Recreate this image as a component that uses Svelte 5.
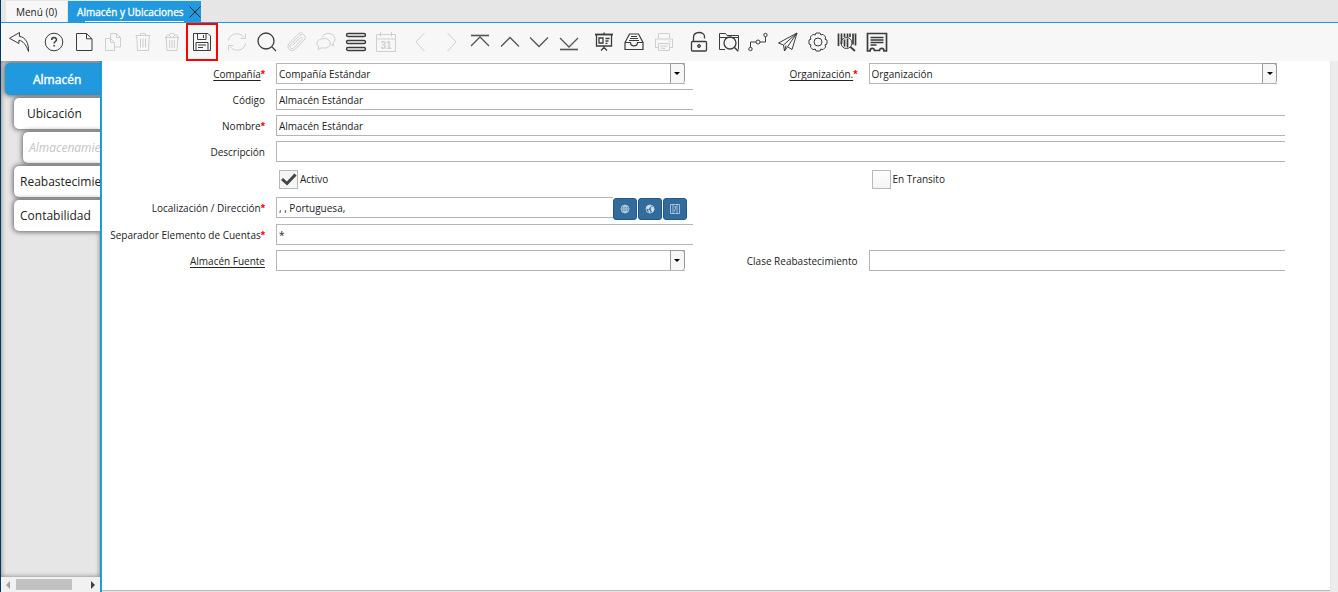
<script>
  const groups = [
    { size: 'one', items: [{ id: 'undo', label: 'Ignorar cambios' }] },
    {
      size: 'six',
      items: [
        { id: 'help', label: 'Ayuda' },
        { id: 'new', label: 'Nuevo' },
        { id: 'copy', label: 'Copiar', off: true },
        { id: 'trash', label: 'Eliminar', off: true },
        { id: 'trashAll', label: 'Eliminar selección', off: true },
        { id: 'save', label: 'Guardar', marked: true }
      ]
    },
    {
      size: 'six records',
      items: [
        { id: 'refresh', label: 'Refrescar', off: true },
        { id: 'find', label: 'Buscar' },
        { id: 'attach', label: 'Anexo', off: true },
        { id: 'chat', label: 'Notas', off: true },
        { id: 'grid', label: 'Cambiar vista' },
        { id: 'calendar', label: 'Historia', off: true }
      ]
    },
    {
      size: 'six',
      items: [
        { id: 'prev', label: 'Registro padre', off: true },
        { id: 'next', label: 'Registro detalle', off: true },
        { id: 'first', label: 'Primero', mid: true },
        { id: 'up', label: 'Anterior', mid: true },
        { id: 'down', label: 'Siguiente', mid: true },
        { id: 'last', label: 'Último', mid: true }
      ]
    },
    {
      size: 'three',
      items: [
        { id: 'report', label: 'Reporte' },
        { id: 'archive', label: 'Archivo' },
        { id: 'print', label: 'Imprimir', off: true }
      ]
    },
    {
      size: 'seven',
      items: [
        { id: 'lock', label: 'Bloquear' },
        { id: 'zoom', label: 'Visor' },
        { id: 'flow', label: 'Flujo' },
        { id: 'send', label: 'Solicitudes' },
        { id: 'gear', label: 'Proceso' },
        { id: 'barcode', label: 'Producto' },
        { id: 'receipt', label: 'Formulario' }
      ]
    }
  ];

  const sideTabs = [
    { label: 'Almacén', kind: 'active' },
    { label: 'Ubicación', kind: 'wide' },
    { label: 'Almacenamiento', kind: 'nested' },
    { label: 'Reabastecimiento', kind: '' },
    { label: 'Contabilidad', kind: '' }
  ];

  let active = $state(true);
  let transit = $state(false);
</script>

{#snippet icon(id)}
  <svg viewBox="0 0 22 22" width="22" height="22" aria-hidden="true">
    {#if id === 'undo'}
      <path d="M11.5 1.5 1.5 7.3l9.4 5.2V9.3c4 .6 7 4 9.6 11.2.5-8-3-14.5-9.2-15.2z" />
    {:else if id === 'help'}
      <circle cx="11" cy="11" r="8.8" />
      <path stroke-width="1.5" d="M8.7 9c0-3.200 4.800-3.200 4.800-.3 0 1.800-2.400 1.800-2.400 3.800M11.100 14v1.600" />
    {:else if id === 'new'}
      <path d="M3.500 2.500h10l5.500 5.300v11.700h-15.500zM13.500 2.500v5.300H19" />
    {:else if id === 'copy'}
      <path d="M8.500 7.500v-5h6l4 4v9.500h-6M14.500 2.500v4h4M3.500 7.500h5l4 4v8h-9zM8.500 7.500v4h4" />
    {:else if id === 'trash'}
      <path d="M3.500 4.500h15M8.500 4.500v-2h5v2M4.700 4.500l.8 15h11l.8-15M8.500 7.500v9M11 7.500v9M13.500 7.500v9" />
    {:else if id === 'trashAll'}
      <path d="M4 6.500h14M5 6.500l1 13h10l1-13M5 6.300c0-2 1.600-2.600 3-2.300 1-2.200 5-2.200 6 0 1.500-.3 3 .5 3 2.300M8.700 9v8M11 9v8M13.300 9v8M8 4l2 2M14 4l-2 2" />
    {:else if id === 'save'}
      <path d="M2.500 2.500h14.500l2.500 2.500v14.500h-17zM6.500 2.500v6h8.500v-6M12.500 4v3M5 19.500v-8h12v8M7 14h8M7 16.500h5" />
    {:else if id === 'refresh'}
      <path d="M2.500 9.500C3.500 2 14 .5 18 6.500M19.500 2.500v5h-5M19.500 12.500c-1 7.500-11.500 9-15.500 3M2.500 19.500v-5h5" />
    {:else if id === 'find'}
      <circle cx="10" cy="10" r="8" stroke-width="1.300" /><path stroke-width="1.300" d="M15.600 15.600 20 20" />
    {:else if id === 'attach'}
      <path d="M6.500 14.500 14 6.800c1.500-1.300 3.200.5 1.800 1.900l-7.600 8c-2.700 2.500-5.700-.5-3.300-3.200l8.600-9c3.500-3.400 8 .8 4.700 4.500l-8.600 9c-4.500 4.200-10.300-1.300-6.300-5.800l8-8.400c1.400-1.500 3-2.300 5-2" />
    {:else if id === 'chat'}
      <path d="M7.500 6C9 1 19 1 20 7.500c.2 2-.8 3.300-2 4.300l.7 3-3-1.500M9 7.500c8 0 8.500 9.500.5 9.500-1.400 0-2 .1-2.700-.3L3 18.500l.8-3C-.5 12.500 3 7.500 9 7.500z" />
    {:else if id === 'grid'}
      <rect x="1.500" y="2.500" width="19" height="3" rx="1.500" stroke-width="1.400" /><rect x="1.500" y="9.500" width="19" height="3" rx="1.500" stroke-width="1.400" /><rect x="1.500" y="16.500" width="19" height="3" rx="1.500" stroke-width="1.400" />
    {:else if id === 'calendar'}
      <path d="M1.500 3.500h19v17h-19zM1.500 8h19M5.500 1v4.500M16.500 1v4.500" />
      <text x="11" y="18">31</text>
    {:else if id === 'prev'}
      <path d="M14.500 2 6 11l8.500 9" />
    {:else if id === 'next'}
      <path d="M7.500 2l8.500 9-8.500 9" />
    {:else if id === 'first'}
      <path d="M2 4.500h18" stroke-width="1.600" /><path stroke-width="1.300" d="M2 15l9-9 9 9" />
    {:else if id === 'up'}
      <path stroke-width="1.300" d="M2 15.500l9-9 9 9" />
    {:else if id === 'down'}
      <path stroke-width="1.300" d="M2 6.500l9 9 9-9" />
    {:else if id === 'last'}
      <path stroke-width="1.300" d="M2 7l9 9 9-9" /><path d="M2 18.500h18" stroke-width="1.600" />
    {:else if id === 'report'}
      <path stroke-width="1.800" d="M2 3.500h18" />
      <path stroke-width="1.300" d="M3.500 4v11h15V4M6 7h4v5H6zM12.500 7.500h4M12.500 10h3M12.500 12.300h2M11 1.500v2M11 15v3M8 19.500l3-3 3 3" />
    {:else if id === 'archive'}
      <path stroke-width="1.200" d="M2 11.500 6.500 3h9L20 11.500v7H2zM2 11.500h5.500c0 4.500 7 4.500 7 0H20M8 5.500h6M7 7.500h8M6 9.500h10" />
    {:else if id === 'print'}
      <path d="M5.500 8V2.500h11V8M5.500 16.500h-3V8h17v8.500h-3M5.500 12.500h11v7h-11zM7.500 15h7M7.500 17.300h5M15.500 10.300h2" />
    {:else if id === 'lock'}
      <rect x="3.500" y="10.500" width="15" height="9.500" rx="1" stroke-width="1.300" />
      <path stroke-width="1.300" d="M5.500 10V6.500c0-6.500 11-6.500 11-1v2M11 13.500v3" /><circle cx="11" cy="15" r="1.500" />
    {:else if id === 'zoom'}
      <path d="M7 18.500H1.500v-16h6l1.500 2h11.500v14M1.500 6.500h19" /><circle cx="12" cy="12" r="6" stroke-width="1.300" /><path stroke-width="1.500" d="m16.500 16.500 3.800 3.800" />
    {:else if id === 'flow'}
      <circle cx="3.500" cy="18" r="1.700" /><circle cx="11" cy="11" r="2" /><circle cx="18.500" cy="4" r="1.700" />
      <path d="M3.500 16.300V11H9M13 11h5.500V5.700" />
    {:else if id === 'send'}
      <path d="M20 2 1.500 12l5 2 1 6 3-4.200 4.500 2.700zM20 2 6.500 14M20 2l-9.500 13.800M7.500 20l1.500-5.500" />
    {:else if id === 'gear'}
      <circle cx="11" cy="11" r="4" />
      <path stroke-linejoin="round" d="M9 2h4l.8 2 2.200-.7 2.700 2.700-.7 2.200 2 .8v4l-2 .8.7 2.200-2.700 2.700-2.200-.7-.8 2H9l-.8-2-2.200.7L3.300 16l.7-2.200-2-.8V9l2-.8L3.300 6 6 3.300l2.200.7z" />
    {:else if id === 'barcode'}
      <path stroke-width="1.700" d="M2.500 2.500V15M5.500 2.500V13M8.500 2.500V6M11.500 2.500V6M14 2.500V6M17 2.500v11M19.500 2.500v12M8.500 8.500v7M11.500 7.500v9" />
      <circle cx="10.500" cy="12" r="5.500" /><path stroke-width="1.700" d="m14.500 16 4.500 4" />
    {:else}
      <path stroke-width="1.700" d="M1.500 20V2.500h19V20h-2.500c0-3.500-4.500-3.500-4.500-.5h-5c0-3-4.500-3-4.500.5z" />
      <path stroke-width="1.300" d="M4.500 6.500h13M4.500 9h13M4.500 11.500h13M4.500 14h6" />
    {/if}
  </svg>
{/snippet}

{#snippet combo(id, value)}
  <div class="combo">
    <select {id}><option>{value}</option></select>
    <span class="arrow" aria-hidden="true"></span>
  </div>
{/snippet}

<div class="app">
  <nav class="tabs" aria-label="Ventanas">
    <button class="tab">Menú (0)</button>
    <div class="tab current">
      <button class="name">Almacén y Ubicaciones</button>
      <button class="close" aria-label="Cerrar">
        <svg viewBox="0 0 12 12" width="12" height="12"><path d="M.5.5l11 11M11.500.5l-11 11" /></svg>
      </button>
    </div>
  </nav>

  <div class="toolbar" role="toolbar" aria-label="Acciones">
    {#each groups as group}
      <div class="group {group.size}">
        {#each group.items as item}
          <button class="tool" class:off={item.off} class:mid={item.mid} class:marked={item.marked} disabled={item.off} aria-label={item.label}>
            {@render icon(item.id)}
          </button>
        {/each}
      </div>
    {/each}
  </div>

  <div class="body">
    <aside>
      <div class="side-tabs">
        {#each sideTabs as tab}
          <button class="side {tab.kind}">{tab.label}</button>
        {/each}
      </div>
      <div class="hscroll" aria-hidden="true">
        <i class="left"></i><span class="track"><span class="thumb"></span></span><i class="right"></i>
      </div>
    </aside>

    <main>
      <form>
        <label for="company"><u>Compañía</u><b>*</b></label>
        {@render combo('company', 'Compañía Estándar')}
        <label for="org"><u>Organización.</u><b>*</b></label>
        {@render combo('org', 'Organización')}

        <label for="code">Código</label>
        <input id="code" class="text" value="Almacén Estándar" />

        <label class="start" for="name">Nombre<b>*</b></label>
        <input id="name" class="text full" value="Almacén Estándar" />

        <label class="start" for="desc">Descripción</label>
        <input id="desc" class="text full" />

        <label class="check second"><input type="checkbox" bind:checked={active} />Activo</label>
        <label class="check fourth"><input type="checkbox" bind:checked={transit} />En Transito</label>

        <label class="start" for="place">Localización / Dirección<b>*</b></label>
        <div class="place">
          <input id="place" class="text" value=", , Portuguesa," />
          <button type="button" aria-label="Dirección">
            <svg viewBox="0 0 10 10" width="10" height="10"><circle cx="5" cy="5" r="4" /><path d="M1 5h8M2 2.800h6M2 7.200h6M5 1v8M5 1c-2.500 2-2.500 6 0 8M5 1c2.500 2 2.500 6 0 8" /></svg>
          </button>
          <button type="button" aria-label="Mapa">
            <svg viewBox="0 0 10 10" width="10" height="10"><circle cx="5" cy="5" r="4" /><path class="fill" d="M2 2.500 5 1l1 1.500-2 1V5L1.500 4.500zM6.500 3l2 .5.5 2L7.500 8 6 6zM3.500 6l1.500 1-.5 2z" /></svg>
          </button>
          <button type="button" aria-label="Ruta">
            <svg viewBox="0 0 10 10" width="10" height="10"><path d="M.5.5h9v9h-9zM3 .5v9M7 .5v9M4.200 3l1.500-.5V5L4.500 6v1.500" /></svg>
          </button>
        </div>

        <label class="start" for="sep">Separador Elemento de Cuentas<b>*</b></label>
        <input id="sep" class="text" value="*" />

        <label class="start" for="source"><u>Almacén Fuente</u></label>
        {@render combo('source', '')}
        <label for="cls">Clase Reabastecimiento</label>
        <input id="cls" class="text" />
      </form>
    </main>
  </div>
</div>

<style>
  :global(body) {
    margin: 0;
  }
  * {
    box-sizing: border-box;
  }
  .app {
    display: flex;
    flex-direction: column;
    min-height: 100vh;
    border-left: 1px solid #003764;
    background: #ececec;
    color: #222;
    font-family: 'Open Sans', 'Noto Sans', sans-serif;
    font-size: 10px;
  }
  button,
  input,
  select {
    margin: 0;
    padding: 0;
    border: 0;
    border-radius: 0;
    background: none;
    color: inherit;
    font: inherit;
  }
  svg {
    display: block;
    fill: none;
    stroke: currentColor;
  }
  .tabs {
    display: flex;
    gap: 1px;
    height: 23px;
    padding-left: 5px;
    border-bottom: 1px solid #2199de;
    background: #e6e6e6;
  }
  .tab {
    height: 21px;
    margin-top: 1px;
    padding: 0 10px;
    background: #f7f7f7;
  }
  .current {
    display: flex;
    align-items: center;
    padding: 0 0 0 9px;
    background: #2199de;
    color: #fff;
  }
  .name {
    align-self: stretch;
    background: linear-gradient(#fff, #fff) 8px 100% / 100% 1px no-repeat;
    -webkit-text-stroke: 0.3px #fff;
  }
  .close {
    margin-left: 5px;
    color: #222;
  }
  .toolbar {
    display: flex;
    gap: 13px;
    height: 38px;
    padding-left: 7px;
    background: #f7f7f7;
  }
  .group {
    display: flex;
    justify-content: space-between;
  }
  .one {
    width: 22px;
  }
  .three {
    width: 82px;
  }
  .six {
    width: 170px;
  }
  .six.records {
    width: 171px;
  }
  .seven {
    width: 200px;
  }
  .tool {
    position: relative;
    display: flex;
    align-items: center;
    color: #3c3c3c;
  }
  .mid {
    color: #555;
  }
  .off {
    color: #cfcfcf;
  }
  .marked::after {
    content: '';
    position: absolute;
    inset: 0 -5px;
    border: 2px solid #f00;
  }
  .tool text {
    fill: currentColor;
    stroke: none;
    font: bold 10px 'Liberation Sans', sans-serif;
    text-anchor: middle;
  }
  .body {
    display: flex;
    flex: 1;
  }
  aside {
    display: flex;
    flex: none;
    flex-direction: column;
    width: 101px;
    border-right: 2px solid #0d9adb;
    background: #e6e6e6;
  }
  .side-tabs {
    display: flex;
    flex: 1;
    flex-direction: column;
    align-items: flex-end;
    gap: 3px;
    overflow: hidden;
    padding-top: 2px;
    box-shadow: inset 0 0 5px #777;
  }
  .side {
    width: 86px;
    height: 31px;
    padding-left: 6px;
    overflow: hidden;
    border-radius: 5px 0 0 5px;
    background: #fff;
    box-shadow: 0 0 5px 1px #666;
    color: #222;
    font-size: 12px;
    text-align: left;
    white-space: nowrap;
  }
  .side.active {
    width: 95px;
    height: 32px;
    padding-left: 28px;
    background: #2199de;
    color: #fff;
    -webkit-text-stroke: 0.4px #fff;
  }
  .side.wide {
    padding-left: 13px;
  }
  .side.nested {
    width: 77px;
    color: #c4c4c4;
    font-style: italic;
  }
  .hscroll {
    display: flex;
    align-items: center;
    height: 15px;
    padding: 0 5px;
    background: #f1f1f1;
  }
  .hscroll i {
    border: 4px solid transparent;
  }
  .hscroll .left {
    border-left-width: 0;
    border-right-color: #a3a3a3;
  }
  .hscroll .right {
    border-right-width: 0;
    border-left-color: #404040;
  }
  .track {
    flex: 1;
    padding: 0 6px;
  }
  .thumb {
    display: block;
    width: 56px;
    height: 11px;
    background: #c1c1c1;
  }
  main {
    flex: 1;
    min-width: 0;
    margin: 0 8px 2px 0;
    padding: 2px 45px 0 0;
    background: #fff;
    box-shadow: 0 1px 1px #bbb;
  }
  form {
    display: grid;
    grid-template-columns: 174px 1fr 176px 1fr;
    grid-template-rows: 26px 26px 26px 26px 30px 27px 26px 26px;
    align-items: start;
  }
  label {
    padding-right: 11px;
    line-height: 22px;
    text-align: right;
    white-space: nowrap;
  }
  .start {
    grid-column: 1;
  }
  b {
    color: #f00;
    font-family: 'Liberation Sans', sans-serif;
    font-size: 11px;
    font-weight: 700;
    line-height: 1;
  }
  u {
    text-underline-offset: 2px;
  }
  .text {
    width: 100%;
    min-width: 0;
    height: 21px;
    padding: 0 2px;
    border: 1px solid #b5b5b5;
    border-right: 0;
    background: #fff;
  }
  .full {
    grid-column: 2 / 5;
  }
  .combo {
    position: relative;
    margin-right: 8px;
  }
  select {
    display: block;
    appearance: none;
    width: 100%;
    height: 21px;
    padding: 0 16px 0 2px;
    border: 1px solid #b5b5b5;
    border-right: 0;
  }
  .arrow {
    position: absolute;
    inset: 0 0 1px auto;
    display: grid;
    place-items: center;
    width: 15px;
    border: 1px solid #999;
    border-bottom: 0;
    border-radius: 0 3px 3px 0;
    background: #f7f7f7;
    pointer-events: none;
  }
  .arrow::after {
    content: '';
    border: 3px solid transparent;
    border-top-color: #000;
    border-bottom: 0;
  }
  .check {
    display: flex;
    align-items: center;
    gap: 2px;
    padding: 1px 0 0 3px;
  }
  .second {
    grid-column: 2;
  }
  .fourth {
    grid-column: 4;
  }
  .check input {
    appearance: none;
    width: 19px;
    height: 19px;
    border: 1px solid #b5b9bd;
    background: linear-gradient(#fff, #f3f3f3);
  }
  .check input:checked {
    background: url("data:image/svg+xml,%3Csvg xmlns='http://www.w3.org/2000/svg' viewBox='0 0 17 17'%3E%3Cpath d='M2 8l5 4.500L15.500 3.500' fill='none' stroke='%23444' stroke-width='3'/%3E%3C/svg%3E") center / 17px 17px no-repeat #f5f5f5;
  }
  .place {
    display: flex;
    align-items: flex-start;
    gap: 1px;
    margin-right: 6px;
  }
  .place .text {
    flex: 1;
    margin-right: -1px;
  }
  .place button {
    display: grid;
    flex: none;
    place-items: center;
    width: 24px;
    height: 22px;
    margin-top: 1px;
    border: 1px solid #1f5a88;
    border-radius: 3px;
    background: #336b9c;
    color: #d3e2ee;
  }
  .place svg {
    stroke-width: 0.7;
  }
  .fill {
    fill: currentColor;
  }
</style>
